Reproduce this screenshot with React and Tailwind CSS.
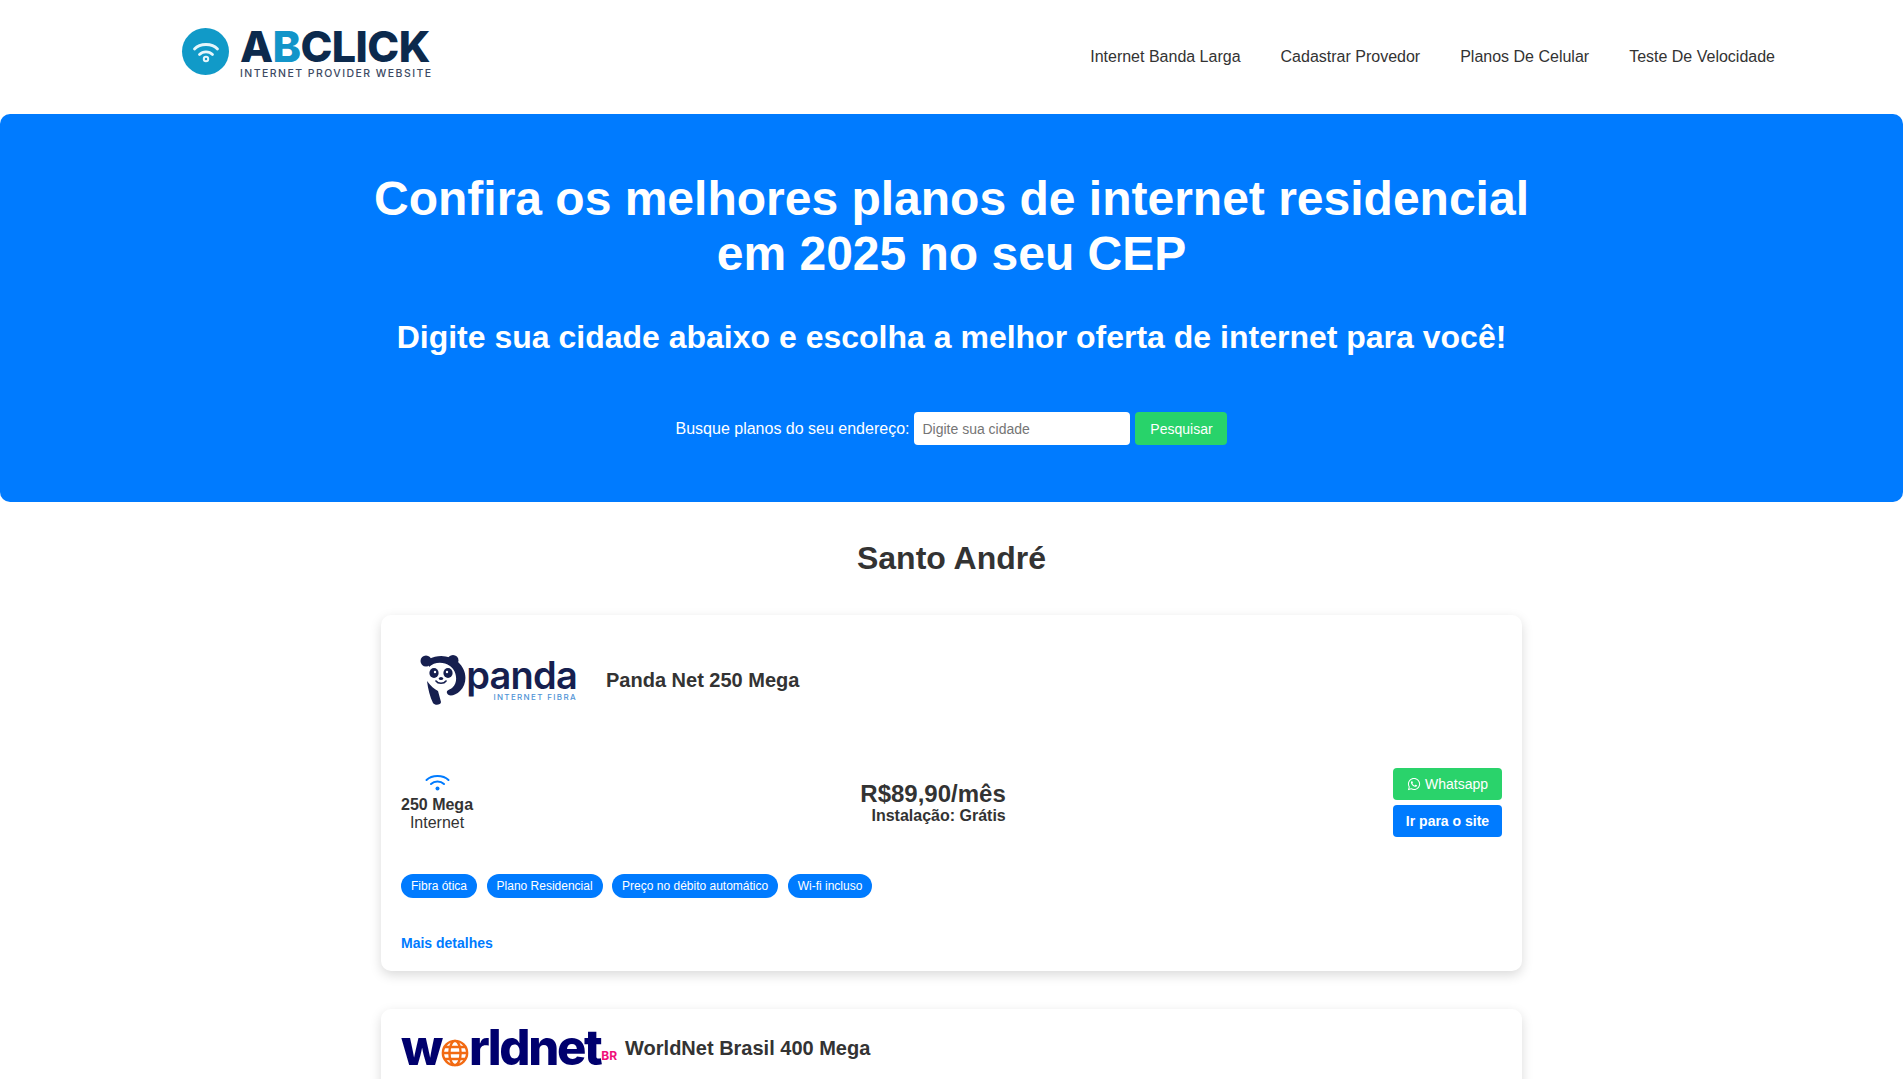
import { FaWhatsapp } from 'react-icons/fa';

const NAV = ['Internet Banda Larga', 'Cadastrar Provedor', 'Planos De Celular', 'Teste De Velocidade'];
const TAGS = ['Fibra ótica', 'Plano Residencial', 'Preço no débito automático', 'Wi-fi incluso'];

function AbclickLogo() {
  return (
    <div className="flex items-center gap-[11px] mb-[11px]">
      <div className="w-[47px] h-[47px] rounded-full bg-[#119ac8] flex items-center justify-center">
        <svg viewBox="0 0 32 32" className="w-[32px] h-[32px]" fill="none" stroke="#e6f6fb" strokeWidth="2.8" strokeLinecap="round">
          <path d="M4.5 13 C10 7 22 7 27.5 13" />
          <path d="M9.5 18.5 C13 15 19 15 22.5 18.5" />
          <circle cx="16" cy="23" r="2.2" strokeWidth="2" />
        </svg>
      </div>
      <div className="flex flex-col items-start pt-[2px] -mb-[2px]">
        <div className="font-['Inter',sans-serif] font-extrabold text-[43px] leading-[38px] tracking-[-0.6px] text-[#0c2a4d]">
          A<span className="text-[#1295c9]">B</span>CLICK
        </div>
        <div className="font-['Inter',sans-serif] font-medium text-[10.5px] leading-[12px] tracking-[1.45px] text-[#3c4a63] mt-[3px]">
          INTERNET PROVIDER WEBSITE
        </div>
      </div>
    </div>
  );
}

function PandaLogo() {
  return (
    <div className="flex items-center gap-[4px] ml-[19px]">
      <svg viewBox="0 0 47 50" className="w-[47px] h-[50px]">
        <circle cx="6" cy="6" r="5.5" fill="#161f4f" />
        <circle cx="33" cy="5.5" r="5.5" fill="#161f4f" />
        <path d="M9 4 C18 -1 30 0 38 7 C47 15 48 28 40 36 C35 41 28 42 27 38 C26 35 30 35 33 32 C38 27 37 16 30 11 C23 6 14 7 9 12 Z" fill="#161f4f" />
        <path d="M7 26 C11 31 14 34 18 36 L21 47 C21 50 15 51 13 48 C10 42 8 34 7 26 Z" fill="#161f4f" />
        <ellipse cx="14" cy="18" rx="4.6" ry="5" fill="#161f4f" />
        <ellipse cx="28" cy="18" rx="4.6" ry="5" fill="#161f4f" />
        <circle cx="15" cy="17" r="1.2" fill="#fff" />
        <circle cx="27" cy="17" r="1.2" fill="#fff" />
        <ellipse cx="21" cy="23.5" rx="2.2" ry="1.5" fill="#161f4f" />
        <path d="M16 26 C18 29 24 29 26 26" stroke="#161f4f" strokeWidth="1.6" fill="none" strokeLinecap="round" />
      </svg>
      <div className="flex flex-col items-end w-[106px]">
        <div className="font-['Inter',sans-serif] font-semibold text-[38px] leading-[33px] tracking-[-0.8px] text-[#161f4f]">panda</div>
        <div className="font-['Inter',sans-serif] font-medium text-[8px] leading-[10px] tracking-[1.35px] text-[#4f93d6]">INTERNET FIBRA</div>
      </div>
    </div>
  );
}

function WorldnetLogo() {
  return (
    <div className="flex items-end font-['Inter',sans-serif]">
      <div className="flex items-center font-extrabold text-[49px] leading-[44px] tracking-[-2.4px] text-[#00006e]">
        <span>w</span>
        <svg viewBox="0 0 30 30" className="w-[28px] h-[28px] mt-[9px] shrink-0" fill="none" stroke="#f26a12" strokeWidth="2.6">
          <circle cx="15" cy="15" r="13" />
          <ellipse cx="15" cy="15" rx="6" ry="13" />
          <path d="M2 15 H28 M4 8.5 H26 M4 21.5 H26" />
        </svg>
        <span>rldnet</span>
      </div>
      <span className="font-bold text-[12px] leading-[12px] text-[#f0107a] mb-[8px] ml-[1px]">BR</span>
    </div>
  );
}

function WifiIcon() {
  return (
    <svg viewBox="0 0 25 17" className="w-[25px] h-[17px] mb-[5px]" fill="none" stroke="#007bff" strokeWidth="2" strokeLinecap="round">
      <path d="M1.5 6 C7 0.7 18 0.7 23.5 6" />
      <path d="M6 10 C9.5 6.8 15.5 6.8 19 10" />
      <circle cx="12.5" cy="14.5" r="2" fill="#007bff" stroke="none" />
    </svg>
  );
}

function PlanCard() {
  return (
    <article className="bg-white rounded-[10px] shadow-[0_4px_12px_rgba(0,0,0,0.15)] p-5 h-[356px]">
      <div className="flex items-center gap-[29px] h-[90px]">
        <PandaLogo />
        <h3 className="text-xl font-bold">Panda Net 250 Mega</h3>
      </div>
      <div className="flex items-center justify-between mt-[43px]">
        <div className="flex flex-col items-center leading-[18px]">
          <WifiIcon />
          <span className="font-bold">250 Mega</span>
          <span>Internet</span>
        </div>
        <div className="flex flex-col items-end">
          <span className="text-2xl font-bold leading-[26px]">R$89,90/mês</span>
          <span className="font-bold leading-[18px]">Instalação: Grátis</span>
        </div>
        <div className="flex flex-col gap-[5px] w-[109px] text-sm text-white">
          <a className="h-8 rounded bg-[#2ad36b] flex items-center justify-center gap-1">
            <FaWhatsapp className="text-sm" />
            Whatsapp
          </a>
          <a className="h-8 rounded bg-[#007bff] flex items-center justify-center font-bold">Ir para o site</a>
        </div>
      </div>
      <div className="flex gap-[9.5px] mt-[37px]">
        {TAGS.map((t) => (
          <span key={t} className="h-6 px-[10px] rounded-full bg-[#007bff] text-white text-xs flex items-center">
            {t}
          </span>
        ))}
      </div>
      <a className="block mt-[35px] text-sm font-bold text-[#007bff]">Mais detalhes</a>
    </article>
  );
}

export default function App() {
  return (
    <div className="h-[1079px] overflow-hidden bg-white font-['Liberation_Sans',Arial,sans-serif] text-[#333]">
      <header className="h-[114px] flex items-center justify-between pl-[182px] pr-[128px]">
        <AbclickLogo />
        <nav className="flex gap-10 text-base">
          {NAV.map((n) => (
            <a key={n}>{n}</a>
          ))}
        </nav>
      </header>

      <section className="h-[388px] bg-[#007bff] rounded-[10px] text-white text-center pt-[57px]">
        <h1 className="text-[48px] leading-[55px] font-bold">
          Confira os melhores planos de internet residencial
          <br />
          em 2025 no seu CEP
        </h1>
        <h2 className="text-[32px] leading-[40px] font-bold mt-[36px]">
          Digite sua cidade abaixo e escolha a melhor oferta de internet para você!
        </h2>
        <form className="flex items-center justify-center gap-[5px] mt-[55px]">
          <label>Busque planos do seu endereço:</label>
          <input
            placeholder="Digite sua cidade"
            className="w-[216px] h-[33px] rounded bg-white px-2 text-sm text-[#333] placeholder:text-[#757575] outline-none"
          />
          <button type="button" className="w-[92px] h-[33px] rounded bg-[#28d36a] text-sm text-white">
            Pesquisar
          </button>
        </form>
      </section>

      <main className="w-[1141px] mx-auto">
        <h2 className="text-[32px] leading-[40px] font-bold text-center mt-[36px] mb-[37px]">Santo André</h2>
        <PlanCard />
        <article className="bg-white rounded-[10px] shadow-[0_4px_12px_rgba(0,0,0,0.15)] p-5 mt-[38px] h-[357px]">
          <div className="flex items-center gap-[8px] -mt-[3px]">
            <WorldnetLogo />
            <h3 className="text-xl font-bold">WorldNet Brasil 400 Mega</h3>
          </div>
        </article>
      </main>
    </div>
  );
}
